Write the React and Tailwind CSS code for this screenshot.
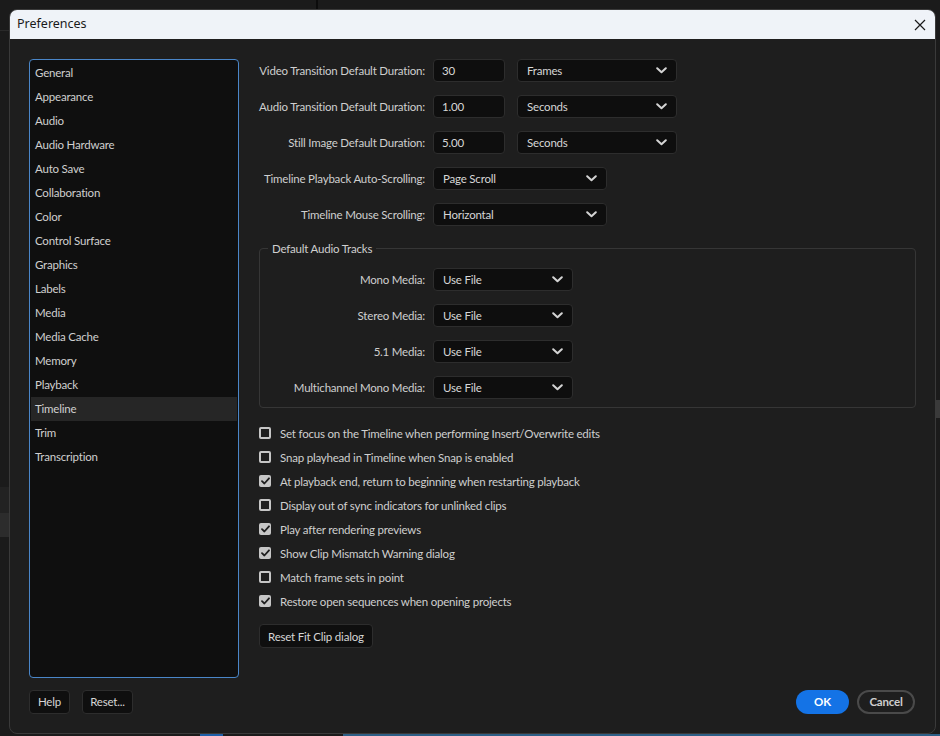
import React from "react";

const FONT = { fontFamily: "Lato, 'Open Sans', sans-serif", letterSpacing: "-0.2px" };

function Chevron() {
  return (
    <svg width="11" height="7" viewBox="0 0 11 7" className="shrink-0">
      <polyline points="1.2,1.2 5.5,5.3 9.8,1.2" fill="none" stroke="#d4d4d4" strokeWidth="2" strokeLinecap="round" strokeLinejoin="round" />
    </svg>
  );
}

function Select({ value, w }) {
  return (
    <div className={`${w} h-[23px] flex items-center justify-between pl-[9px] pr-[9px] bg-[#0e0e0e] border border-[#2d2d2d] rounded-[4px] text-[#d6d6d6]`}>
      <span>{value}</span>
      <Chevron />
    </div>
  );
}

function Input({ value }) {
  return (
    <div className="w-[72px] h-[23px] flex items-center pl-[8px] bg-[#0e0e0e] border border-[#2d2d2d] rounded-[4px] text-[#d6d6d6]">
      {value}
    </div>
  );
}

function Checkbox({ checked, label }) {
  return (
    <div className="h-[24px] flex items-center gap-[9px]">
      {checked ? (
        <div className="w-[12px] h-[12px] rounded-[2px] bg-[#c6c6c6] flex items-center justify-center">
          <svg width="9" height="8" viewBox="0 0 9 8">
            <polyline points="1,4.2 3.4,6.5 8,1.3" fill="none" stroke="#1e1e1e" strokeWidth="1.8" strokeLinecap="round" strokeLinejoin="round" />
          </svg>
        </div>
      ) : (
        <div className="w-[12px] h-[12px] rounded-[2px] border-2 border-[#c6c6c6]" />
      )}
      <span className="text-[#cfcfcf]">{label}</span>
    </div>
  );
}

const navItems = [
  "General", "Appearance", "Audio", "Audio Hardware", "Auto Save", "Collaboration", "Color",
  "Control Surface", "Graphics", "Labels", "Media", "Media Cache", "Memory", "Playback",
  "Timeline", "Trim", "Transcription",
];

export default function App() {
  return (
    <div className="w-[940px] h-[736px] bg-[#1b1b1b] relative overflow-hidden text-[11.5px]" style={FONT}>
      {/* background fragments of the app behind */}
      <div className="absolute left-[316px] top-0 w-[2px] h-[9px] bg-[#0c0c0c]" />
      <div className="absolute left-0 top-[30px] w-[9px] h-px bg-[#2a2a2a]" />
      <div className="absolute left-0 top-[487px] w-[9px] h-[34px] bg-[#222]" />
      <div className="absolute left-0 top-[513px] w-[9px] h-[24px] bg-[#2c2c2c]" />
      <div className="absolute left-[200px] bottom-0 w-[23px] h-[2px] bg-[#1e5fa8]" />
      <div className="absolute left-[343px] bottom-0 w-[597px] h-[2px] bg-[#2d5f86]" />
      <div className="absolute right-0 top-[400px] w-[4px] h-[18px] bg-[#3a3a3a]" />

      <div className="pt-[9px] pl-[9px]">
        <div className="w-[927px] h-[725px] rounded-[8px] overflow-hidden border border-[#3a3a3a] bg-[#1e1e1e] flex flex-col">
          {/* title bar */}
          <div className="h-[29px] shrink-0 bg-[#eff3f8] flex items-center justify-between pl-[7px] pr-[9px]">
            <span className="text-[12.5px] text-[#1a1a1a]" style={{ fontFamily: "'Noto Sans', sans-serif", letterSpacing: "0" }}>Preferences</span>
            <svg width="12" height="12" viewBox="0 0 12 12">
              <path d="M1 1 L11 11 M11 1 L1 11" stroke="#1a1a1a" strokeWidth="1.2" />
            </svg>
          </div>

          {/* body */}
          <div className="flex-1 flex flex-col px-[19px] pt-[20px]">
            <div className="flex gap-[20px] h-[619px]">
              {/* sidebar */}
              <div className="w-[210px] h-full bg-[#0f0f0f] border border-[#4a86c8] rounded-[4px] p-px">
                {navItems.map((n) => (
                  <div
                    key={n}
                    className={`h-[24px] flex items-center pl-[4px] text-[#d0d0d0] ${n === "Timeline" ? "bg-[#262626]" : ""}`}
                  >
                    {n}
                  </div>
                ))}
              </div>

              {/* content */}
              <div className="flex-1 flex flex-col">
                <div className="flex flex-col gap-[13px]">
                  {[
                    ["Video Transition Default Duration:", "30", "Frames"],
                    ["Audio Transition Default Duration:", "1.00", "Seconds"],
                    ["Still Image Default Duration:", "5.00", "Seconds"],
                  ].map(([l, v, s]) => (
                    <div key={l} className="flex items-center">
                      <div className="w-[166px] text-right text-[#cfcfcf] whitespace-nowrap">{l}</div>
                      <div className="ml-[8px]"><Input value={v} /></div>
                      <div className="ml-[12px]"><Select value={s} w="w-[160px]" /></div>
                    </div>
                  ))}
                  {[
                    ["Timeline Playback Auto-Scrolling:", "Page Scroll"],
                    ["Timeline Mouse Scrolling:", "Horizontal"],
                  ].map(([l, s]) => (
                    <div key={l} className="flex items-center">
                      <div className="w-[166px] text-right text-[#cfcfcf] whitespace-nowrap">{l}</div>
                      <div className="ml-[8px]"><Select value={s} w="w-[174px]" /></div>
                    </div>
                  ))}
                </div>

                <fieldset className="mt-[14px] border border-[#363636] rounded-[4px] pl-0 pr-0 pb-[8px] pt-[11px]">
                  <legend className="ml-[8px] px-[4px] text-[#cfcfcf]">Default Audio Tracks</legend>
                  <div className="flex flex-col gap-[13px]">
                    {["Mono Media:", "Stereo Media:", "5.1 Media:", "Multichannel Mono Media:"].map((l) => (
                      <div key={l} className="flex items-center">
                        <div className="w-[165px] text-right text-[#cfcfcf] whitespace-nowrap">{l}</div>
                        <div className="ml-[8px]"><Select value="Use File" w="w-[140px]" /></div>
                      </div>
                    ))}
                  </div>
                </fieldset>

                <div className="mt-[13px] flex flex-col">
                  <Checkbox checked={false} label="Set focus on the Timeline when performing Insert/Overwrite edits" />
                  <Checkbox checked={false} label="Snap playhead in Timeline when Snap is enabled" />
                  <Checkbox checked label="At playback end, return to beginning when restarting playback" />
                  <Checkbox checked={false} label="Display out of sync indicators for unlinked clips" />
                  <Checkbox checked label="Play after rendering previews" />
                  <Checkbox checked label="Show Clip Mismatch Warning dialog" />
                  <Checkbox checked={false} label="Match frame sets in point" />
                  <Checkbox checked label="Restore open sequences when opening projects" />
                </div>

                <div className="mt-[11px]">
                  <div className="inline-flex h-[24px] items-center px-[8px] bg-[#0f0f0f] border border-[#2d2d2d] rounded-[4px] text-[#d6d6d6]">
                    Reset Fit Clip dialog
                  </div>
                </div>
              </div>
            </div>

            {/* footer */}
            <div className="mt-[12px] flex items-center justify-between">
              <div className="flex gap-[12px]">
                <div className="h-[24px] w-[41px] flex items-center justify-center bg-[#0f0f0f] border border-[#2d2d2d] rounded-[4px] text-[#d6d6d6]">Help</div>
                <div className="h-[24px] w-[51px] flex items-center justify-center bg-[#0f0f0f] border border-[#2d2d2d] rounded-[4px] text-[#d6d6d6]">Reset...</div>
              </div>
              <div className="flex gap-[8px] pr-[1px]">
                <div className="h-[24px] w-[53px] flex items-center justify-center rounded-full bg-[#1473e6] text-white font-bold">OK</div>
                <div className="h-[24px] w-[58px] flex items-center justify-center rounded-full border-2 border-[#4a4a4a] text-[#cfcfcf] font-bold">Cancel</div>
              </div>
            </div>
          </div>
        </div>
      </div>
    </div>
  );
}
